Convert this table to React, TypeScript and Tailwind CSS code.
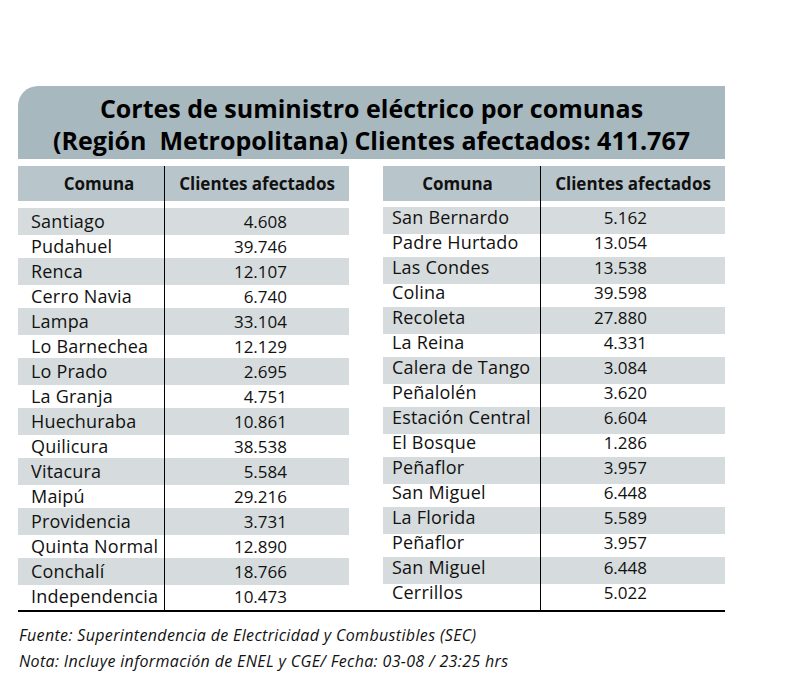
import React from 'react';

type Row = { comuna: string; clientes: string };

const left: Row[] = [
  { comuna: 'Santiago', clientes: '4.608' },
  { comuna: 'Pudahuel', clientes: '39.746' },
  { comuna: 'Renca', clientes: '12.107' },
  { comuna: 'Cerro Navia', clientes: '6.740' },
  { comuna: 'Lampa', clientes: '33.104' },
  { comuna: 'Lo Barnechea', clientes: '12.129' },
  { comuna: 'Lo Prado', clientes: '2.695' },
  { comuna: 'La Granja', clientes: '4.751' },
  { comuna: 'Huechuraba', clientes: '10.861' },
  { comuna: 'Quilicura', clientes: '38.538' },
  { comuna: 'Vitacura', clientes: '5.584' },
  { comuna: 'Maipú', clientes: '29.216' },
  { comuna: 'Providencia', clientes: '3.731' },
  { comuna: 'Quinta Normal', clientes: '12.890' },
  { comuna: 'Conchalí', clientes: '18.766' },
  { comuna: 'Independencia', clientes: '10.473' },
];

const right: Row[] = [
  { comuna: 'San Bernardo', clientes: '5.162' },
  { comuna: 'Padre Hurtado', clientes: '13.054' },
  { comuna: 'Las Condes', clientes: '13.538' },
  { comuna: 'Colina', clientes: '39.598' },
  { comuna: 'Recoleta', clientes: '27.880' },
  { comuna: 'La Reina', clientes: '4.331' },
  { comuna: 'Calera de Tango', clientes: '3.084' },
  { comuna: 'Peñalolén', clientes: '3.620' },
  { comuna: 'Estación Central', clientes: '6.604' },
  { comuna: 'El Bosque', clientes: '1.286' },
  { comuna: 'Peñaflor', clientes: '3.957' },
  { comuna: 'San Miguel', clientes: '6.448' },
  { comuna: 'La Florida', clientes: '5.589' },
  { comuna: 'Peñaflor', clientes: '3.957' },
  { comuna: 'San Miguel', clientes: '6.448' },
  { comuna: 'Cerrillos', clientes: '5.022' },
];

const LeftTable: React.FC = () => (
  <div className="w-[331px] flex flex-col">
    <div className="flex h-[35px] bg-[#b8c5ca] font-bold text-[17px]">
      <div className="w-[146px] flex items-center justify-center pl-[16px]">Comuna</div>
      <div className="flex-1 flex items-center justify-center border-l border-black">Clientes afectados</div>
    </div>
    <div className="flex h-[7px]">
      <div className="w-[146px]" />
      <div className="flex-1 border-l border-black" />
    </div>
    {left.map((r, i) => (
      <div key={i} className={i % 2 === 0 ? 'flex h-[27px] bg-[#d6dcdd]' : 'flex h-[23px]'}>
        <div className="w-[146px] flex items-center pl-[13px] whitespace-nowrap text-[18px] tracking-[0.2px]">{r.comuna}</div>
        <div className="flex-1 flex items-center justify-end pr-[62px] border-l border-black text-[17px]">{r.clientes}</div>
      </div>
    ))}
    <div className="flex flex-1 min-h-[2px]">
      <div className="w-[146px]" />
      <div className="flex-1 border-l border-black" />
    </div>
  </div>
);

const RightTable: React.FC = () => (
  <div className="w-[342px] flex flex-col">
    <div className="flex h-[35px] bg-[#b8c5ca] font-bold text-[17px]">
      <div className="w-[157px] flex items-center justify-center pr-[8px]">Comuna</div>
      <div className="flex-1 flex items-center justify-center border-l border-black">Clientes afectados</div>
    </div>
    <div className="flex h-[6px]">
      <div className="w-[157px]" />
      <div className="flex-1 border-l border-black" />
    </div>
    {right.map((r, i) => (
      <div key={i} className={i % 2 === 0 ? 'flex h-[27px] bg-[#d6dcdd]' : 'flex h-[23px]'}>
        <div className="w-[157px] flex items-center pl-[9px] pb-[6px] whitespace-nowrap text-[18px] tracking-[0.2px]">{r.comuna}</div>
        <div className="flex-1 flex items-center justify-end pr-[78px] pb-[6px] border-l border-black text-[17px]">{r.clientes}</div>
      </div>
    ))}
    <div className="flex flex-1 min-h-[2px]">
      <div className="w-[157px]" />
      <div className="flex-1 border-l border-black" />
    </div>
  </div>
);

export default function App() {
  return (
    <div
      className="w-[787px] h-[679px] bg-white pt-[86px] pl-[18px] text-[#111] overflow-hidden"
      style={{ fontFamily: '"Open Sans", "Liberation Sans", sans-serif' }}
    >
      <div className="w-[707px]">
        {/* Title */}
        <div className="h-[73px] bg-[#a8b8bf] rounded-tl-[20px] pt-[6px] text-center font-bold text-[25px] leading-[32px] text-black">
          <div>Cortes de suministro eléctrico por comunas</div>
          <div>(Región&nbsp; Metropolitana) Clientes afectados: 411.767</div>
        </div>

        {/* Tables */}
        <div className="mt-[7px] flex justify-between border-b-2 border-black">
          <LeftTable />
          <RightTable />
        </div>

        {/* Footer */}
        <div className="mt-[10px] italic text-[16px] tracking-[0.35px] leading-[26px] pl-[1px]">
          <div>Fuente: Superintendencia de Electricidad y Combustibles (SEC)</div>
          <div>Nota: Incluye información de ENEL y CGE/ Fecha: 03-08 / 23:25 hrs</div>
        </div>
      </div>
    </div>
  );
}
